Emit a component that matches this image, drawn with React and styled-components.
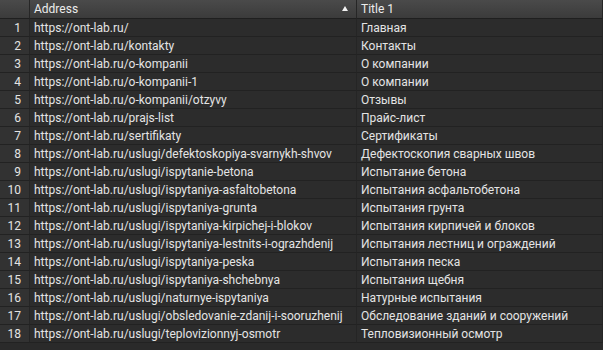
import React from "react";
import styled, { createGlobalStyle } from "styled-components";

const GlobalStyle = createGlobalStyle`
  html, body {
    margin: 0;
    padding: 0;
    background: #2a2a2a;
  }
  body {
    font-family: Roboto, "Liberation Sans", "Noto Sans", sans-serif;
  }
`;

const rows = [
  ["https://ont-lab.ru/", "Главная"],
  ["https://ont-lab.ru/kontakty", "Контакты"],
  ["https://ont-lab.ru/o-kompanii", "О компании"],
  ["https://ont-lab.ru/o-kompanii-1", "О компании"],
  ["https://ont-lab.ru/o-kompanii/otzyvy", "Отзывы"],
  ["https://ont-lab.ru/prajs-list", "Прайс-лист"],
  ["https://ont-lab.ru/sertifikaty", "Сертификаты"],
  ["https://ont-lab.ru/uslugi/defektoskopiya-svarnykh-shvov", "Дефектоскопия сварных швов"],
  ["https://ont-lab.ru/uslugi/ispytanie-betona", "Испытание бетона"],
  ["https://ont-lab.ru/uslugi/ispytaniya-asfaltobetona", "Испытания асфальтобетона"],
  ["https://ont-lab.ru/uslugi/ispytaniya-grunta", "Испытания грунта"],
  ["https://ont-lab.ru/uslugi/ispytaniya-kirpichej-i-blokov", "Испытания кирпичей и блоков"],
  ["https://ont-lab.ru/uslugi/ispytaniya-lestnits-i-ograzhdenij", "Испытания лестниц и ограждений"],
  ["https://ont-lab.ru/uslugi/ispytaniya-peska", "Испытания песка"],
  ["https://ont-lab.ru/uslugi/ispytaniya-shchebnya", "Испытания щебня"],
  ["https://ont-lab.ru/uslugi/naturnye-ispytaniya", "Натурные испытания"],
  ["https://ont-lab.ru/uslugi/obsledovanie-zdanij-i-sooruzhenij", "Обследование зданий и сооружений"],
  ["https://ont-lab.ru/uslugi/teplovizionnyj-osmotr", "Тепловизионный осмотр"],
];

const Grid = styled.div`
  width: 603px;
  height: 350px;
  overflow: hidden;
  background: #2a2a2a;
  display: grid;
  grid-template-columns: 30px 327px 1fr;
  grid-auto-rows: 18px;
  grid-template-rows: 19px;
  align-content: start;
  font-size: 12px;
  color: #e4e4e4;
`;

const HeadCell = styled.div`
  display: flex;
  align-items: center;
  justify-content: ${({ $sorted }) => ($sorted ? "space-between" : "flex-start")};
  padding: 0 8px 0 4px;
  background: linear-gradient(#4a4a4a, #3b3b3b);
  border-right: 1px solid #262626;
  border-bottom: 1px solid #1f1f1f;
  color: #ececec;
  white-space: nowrap;
`;

const SortArrow = styled.span`
  width: 0;
  height: 0;
  border-left: 3px solid transparent;
  border-right: 3px solid transparent;
  border-bottom: 5px solid #f2f2f2;
  margin-top: -1px;
`;

const NumCell = styled.div`
  display: flex;
  align-items: center;
  justify-content: flex-end;
  padding-right: 8px;
  background: #323232;
  border-right: 1px solid #252525;
  border-bottom: 1px solid #222;
`;

const Cell = styled.div`
  display: flex;
  align-items: center;
  padding-left: 4px;
  background: #2c2c2c;
  border-right: 1px solid #252525;
  border-bottom: 1px solid #222;
  white-space: nowrap;
  overflow: hidden;
`;

export default function App() {
  return (
    <>
      <GlobalStyle />
      <Grid>
        <HeadCell />
        <HeadCell $sorted>
          Address
          <SortArrow />
        </HeadCell>
        <HeadCell>Title 1</HeadCell>
        {rows.map(([url, title], i) => (
          <React.Fragment key={url}>
            <NumCell>{i + 1}</NumCell>
            <Cell>{url}</Cell>
            <Cell>{title}</Cell>
          </React.Fragment>
        ))}
      </Grid>
    </>
  );
}
